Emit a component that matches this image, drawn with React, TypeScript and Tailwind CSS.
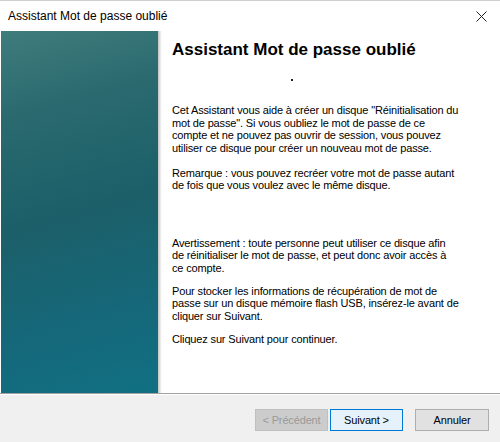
import React from "react";

export default function App() {
  const body = "text-[11px] leading-[12.6px] tracking-[-0.15px] text-black whitespace-nowrap";
  return (
    <div
      className="w-[500px] h-[442px] bg-white flex flex-col overflow-hidden"
      style={{ fontFamily: '"Liberation Sans", Arial, sans-serif' }}
    >
      {/* Title bar */}
      <div className="h-[31px] shrink-0 border-t border-[#cfcfcf] flex items-center justify-between pl-[8px] pr-[12px]">
        <span className="text-[12px] text-black leading-none">Assistant Mot de passe oublié</span>
        <svg width="11" height="11" viewBox="0 0 11 11" className="mr-[1px]">
          <path d="M0.5 0.5 L10.5 10.5 M10.5 0.5 L0.5 10.5" stroke="#222" strokeWidth="1" />
        </svg>
      </div>

      {/* Main */}
      <div className="flex flex-1 min-h-0 pl-[1px]">
        <div className="w-[157px] shrink-0 bg-[linear-gradient(165deg,#3f7c7c_0%,#2a6a6f_22%,#1c5f69_50%,#15687a_78%,#107082_100%)]" />
        <div className="w-[4px] shrink-0 bg-[linear-gradient(90deg,#c4c4c4,#f4f4f4_75%,#ffffff)]" />
        <div className="flex flex-col pl-[10px] pt-[9px]">
          <div className="text-[17px] leading-[20px] font-bold text-black whitespace-nowrap">
            Assistant Mot de passe oublié
          </div>
          <div className="mt-[19px] ml-[119px] w-[2px] h-[2px] bg-[#222]" />
          <div className={`${body} mt-[23px]`}>
            Cet Assistant vous aide à créer un disque "Réinitialisation du
            <br />
            mot de passe". Si vous oubliez le mot de passe de ce
            <br />
            compte et ne pouvez pas ouvrir de session, vous pouvez
            <br />
            utiliser ce disque pour créer un nouveau mot de passe.
          </div>
          <div className={`${body} mt-[12.3px]`}>
            Remarque : vous pouvez recréer votre mot de passe autant
            <br />
            de fois que vous voulez avec le même disque.
          </div>
          <div className={`${body} mt-[44.8px]`}>
            Avertissement : toute personne peut utiliser ce disque afin
            <br />
            de réinitialiser le mot de passe, et peut donc avoir accès à
            <br />
            ce compte.
          </div>
          <div className={`${body} mt-[10.2px]`}>
            Pour stocker les informations de récupération de mot de
            <br />
            passe sur un disque mémoire flash USB, insérez-le avant de
            <br />
            cliquer sur Suivant.
          </div>
          <div className={`${body} mt-[10.2px]`}>Cliquez sur Suivant pour continuer.</div>
        </div>
      </div>

      {/* Separator */}
      <div className="h-[1px] shrink-0 bg-[#a0a0a0]" />
      <div className="h-[1px] shrink-0 bg-white" />

      {/* Button bar */}
      <div className="h-[47px] shrink-0 bg-[#f0f0f0] flex items-start justify-end pt-[14px] pr-[11px]">
        <div className="w-[73px] h-[22px] border border-[#bfbfbf] bg-[#cccccc] text-[#9a9a9a] text-[11px] flex items-center justify-center tracking-[-0.15px]">
          &lt; Précédent
        </div>
        <div className="ml-[2px] w-[73px] h-[22px] border border-[#0078d7] bg-[#e5f1fb] text-black text-[11px] flex items-center justify-center tracking-[-0.15px]">
          Suivant &gt;
        </div>
        <div className="ml-[12px] w-[74px] h-[22px] border border-[#adadad] bg-[#e1e1e1] text-black text-[11px] flex items-center justify-center tracking-[-0.15px]">
          Annuler
        </div>
      </div>
    </div>
  );
}
